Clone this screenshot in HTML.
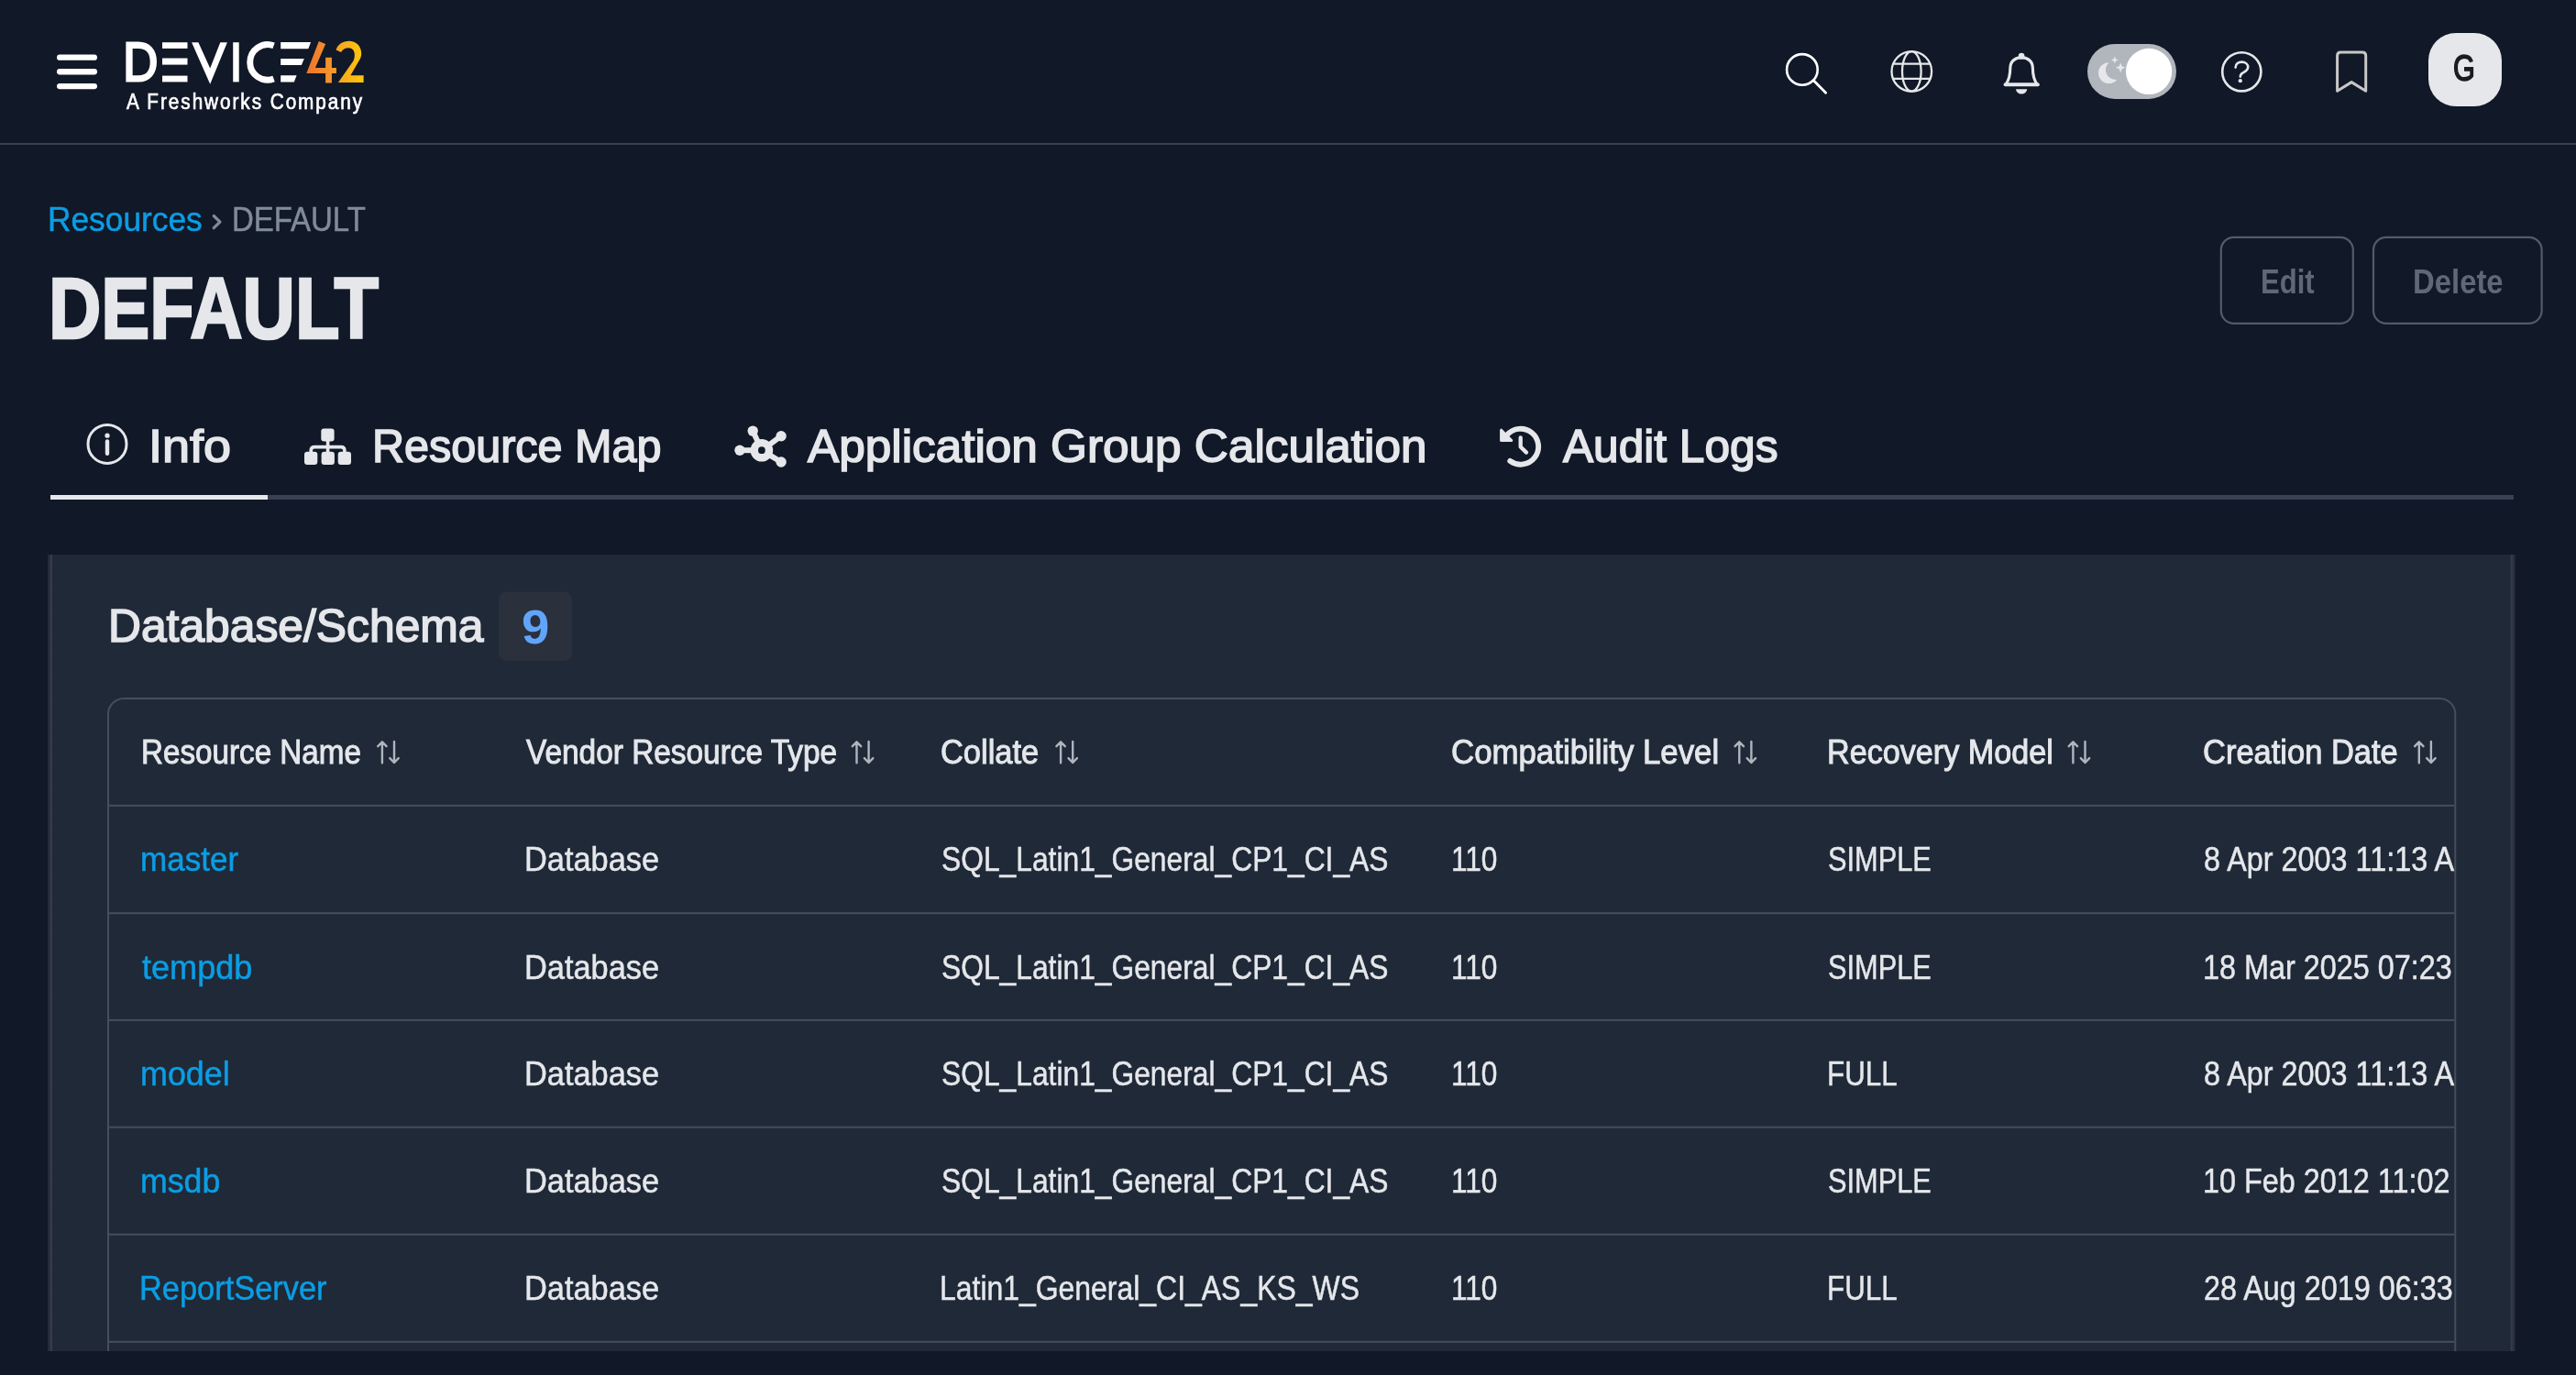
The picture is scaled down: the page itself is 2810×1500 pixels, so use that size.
<!DOCTYPE html>
<html><head><meta charset="utf-8"><title>DEFAULT - Device42</title><style>
html,body{margin:0;padding:0;}
body{width:2810px;height:1500px;background:#111827;position:relative;overflow:hidden;font-family:"Liberation Sans",sans-serif;}
.t{position:absolute;white-space:pre;line-height:1;transform-origin:0 0;}
svg{position:absolute;left:0;top:0;}
</style></head>
<body>
<svg width="2810" height="1500"><rect x="0" y="156" width="2810" height="2" fill="#374151"/>
<rect x="62" y="59.5" width="44" height="6.3" rx="3.15" fill="#ffffff"/>
<rect x="62" y="75.1" width="44" height="6.3" rx="3.15" fill="#ffffff"/>
<rect x="62" y="90.9" width="44" height="6.3" rx="3.15" fill="#ffffff"/>
<path d="M141,49.25 H151 C161.5,49.25 167.35,56.5 167.35,67.6 C167.35,78.7 161.5,85.95 151,85.95 H141 Z" fill="none" stroke="#fff" stroke-width="7.3"/>
<rect x="177" y="46.2" width="27.5" height="6.7" fill="#fff"/>
<rect x="177" y="63.5" width="27.5" height="7.1" fill="#fff"/>
<rect x="177" y="82.6" width="27.5" height="6.8" fill="#fff"/>
<polygon points="209.1,46.2 216.4,46.2 229.2,74.4 240.3,46.2 247.9,46.2 229.2,91.8" fill="#fff"/>
<rect x="254.2" y="46.2" width="6.5" height="43.2" fill="#fff"/>
<path d="M298.60,49.76 A19.3,19.3 0 1 0 298.60,86.04" fill="none" stroke="#fff" stroke-width="6.9"/>
<polygon points="306.2,45.9 339.1,45.9 336.3,53.3 306.2,53.3" fill="#fff"/>
<polygon points="306.2,63.9 331.8,63.9 328.9,70.9 306.2,70.9" fill="#fff"/>
<polygon points="306.2,82.2 323.6,82.2 320.8,89.5 306.2,89.5" fill="#fff"/>
<defs><linearGradient id="g42" x1="334" y1="0" x2="397" y2="0" gradientUnits="userSpaceOnUse"><stop offset="0" stop-color="#ee742c"/><stop offset="0.45" stop-color="#f5962a"/><stop offset="0.6" stop-color="#f9a81e"/><stop offset="1" stop-color="#ffc80c"/></linearGradient></defs>
<polygon points="347.8,45.0 355.1,47.9 343.9,74.0 355.1,74.0 355.1,62.8 361.9,62.8 361.9,74.0 366.9,74.0 366.9,79.9 361.9,79.9 361.9,90.6 355.1,90.6 355.1,79.9 334.3,79.9" fill="url(#g42)"/>
<path d="M366.5,54.4 C368.5,48.5 374,44.8 380.6,44.8 C388.5,44.8 394.2,50.5 394.2,58.5 C394.2,61 393.5,63.2 392.2,65.2 L382.4,82.3 H396.6 V90.1 H368.9 L385.4,66.4 C386.5,64.5 386.8,62 386.8,59.5 C386.8,55 384,52.2 380.3,52.2 C376.5,52.2 373.5,54.2 372.1,57 Z" fill="url(#g42)"/>
<circle cx="1965.9" cy="75.9" r="16.8" fill="none" stroke="#ffffff" stroke-width="2.6"/>
<line x1="1978.3" y1="87.7" x2="1991.6" y2="101.2" stroke="#ffffff" stroke-width="2.8" stroke-linecap="round"/>
<circle cx="2085.3" cy="77.9" r="21.8" fill="none" stroke="#e5e7eb" stroke-width="2.3"/>
<ellipse cx="2085.3" cy="77.9" rx="10.3" ry="21.8" fill="none" stroke="#e5e7eb" stroke-width="2.3"/>
<line x1="2065.14" y1="69.6" x2="2105.46" y2="69.6" stroke="#e5e7eb" stroke-width="2.3"/>
<line x1="2065.02" y1="85.9" x2="2105.58" y2="85.9" stroke="#e5e7eb" stroke-width="2.3"/>
<rect x="2201.8" y="57.8" width="6.6" height="7" rx="3.3" fill="#e5e7eb"/>
<path d="M2188.2,91.8 C2191.8,86.5 2192.8,80 2192.8,74.5 C2192.8,67 2198.2,62.6 2205.1,62.6 C2212,62.6 2217.4,67 2217.4,74.5 C2217.4,80 2218.4,86.5 2222,91.8" fill="none" stroke="#e5e7eb" stroke-width="3.1"/>
<rect x="2185.6" y="90.3" width="39.2" height="3.9" rx="1.95" fill="#e5e7eb"/>
<path d="M2199,97.2 H2211.2 A6.1,5.4 0 0 1 2199,97.2 Z" fill="#e5e7eb"/>
<rect x="2277" y="47.9" width="97" height="60" rx="30" fill="#b1b5bc"/>
<circle cx="2344.1" cy="77.9" r="25.15" fill="#ffffff"/>
<defs><mask id="mm"><rect x="2280" y="55" width="40" height="45" fill="#fff"/><circle cx="2307.6" cy="76.3" r="10.6" fill="#000"/></mask></defs>
<circle cx="2300.4" cy="79.6" r="11.4" fill="#e5e7eb" mask="url(#mm)"/>
<polygon points="2306.80,61.50 2307.93,64.27 2310.70,65.40 2307.93,66.53 2306.80,69.30 2305.67,66.53 2302.90,65.40 2305.67,64.27" fill="#e5e7eb"/>
<polygon points="2313.20,68.40 2314.76,72.24 2318.60,73.80 2314.76,75.36 2313.20,79.20 2311.64,75.36 2307.80,73.80 2311.64,72.24" fill="#e5e7eb"/>
<circle cx="2445.3" cy="78.3" r="21.1" fill="none" stroke="#e5e7eb" stroke-width="2.6"/>
<path d="M2438.6,73.6 C2438.6,69.6 2441.8,67.6 2445.4,67.6 C2449.2,67.6 2452.2,69.8 2452.2,73.3 C2452.2,76.7 2449,78 2446.7,79.4 C2444.6,80.6 2443.8,81.6 2443.8,83.6" fill="none" stroke="#e5e7eb" stroke-width="2.6" stroke-linecap="round"/>
<circle cx="2443.8" cy="88.2" r="2.1" fill="#e5e7eb"/>
<path d="M2549.6,99.2 V60.8 Q2549.6,56.9 2553.5,56.9 H2576.8 Q2580.7,56.9 2580.7,60.8 V99.2 L2565.15,89.6 Z" fill="none" stroke="#c8c8c8" stroke-width="3" stroke-linejoin="round"/>
<rect x="2649" y="36" width="80" height="80" rx="30" fill="#e5e7eb"/>
<rect x="2422.8" y="258.8" width="144" height="94" rx="14" fill="none" stroke="#535b68" stroke-width="2.2"/>
<rect x="2589" y="258.8" width="183.6" height="94" rx="14" fill="none" stroke="#535b68" stroke-width="2.2"/>
<polyline points="233.2,235.5 240,242.1 233.2,248.7" fill="none" stroke="#7f8b98" stroke-width="3.2" stroke-linecap="round" stroke-linejoin="round"/>
<rect x="55" y="540" width="2687" height="5" fill="#374151"/>
<rect x="55" y="540" width="237" height="5" fill="#e5e7eb"/>
<circle cx="117" cy="484.4" r="21" fill="none" stroke="#e5e7eb" stroke-width="3"/>
<circle cx="117" cy="475.2" r="2.6" fill="#e5e7eb"/>
<line x1="117" y1="481.5" x2="117" y2="494.8" stroke="#e5e7eb" stroke-width="4.4" stroke-linecap="round"/>
<rect x="350.3" y="467.4" width="14.3" height="14.1" rx="3.2" fill="#e5e7eb"/>
<rect x="332" y="492.8" width="14.3" height="14.1" rx="3.2" fill="#e5e7eb"/>
<rect x="350.6" y="492.8" width="14.3" height="14.1" rx="3.2" fill="#e5e7eb"/>
<rect x="368.7" y="492.8" width="14.3" height="14.1" rx="3.2" fill="#e5e7eb"/>
<line x1="357.6" y1="480" x2="357.6" y2="494" stroke="#e5e7eb" stroke-width="3.6"/>
<path d="M339.2,494 V491.5 Q339.2,487.6 343.1,487.6 H372 Q375.9,487.6 375.9,491.5 V494" fill="none" stroke="#e5e7eb" stroke-width="3.6"/>
<line x1="820.90" y1="491.20" x2="807" y2="491.2" stroke="#e5e7eb" stroke-width="6"/>
<circle cx="807" cy="491.2" r="5.7" fill="#e5e7eb"/>
<line x1="826.72" y1="482.11" x2="821.2" y2="470.1" stroke="#e5e7eb" stroke-width="6"/>
<circle cx="821.2" cy="470.1" r="5.7" fill="#e5e7eb"/>
<line x1="838.97" y1="485.30" x2="852.1" y2="475.7" stroke="#e5e7eb" stroke-width="6"/>
<circle cx="852.1" cy="475.7" r="5.7" fill="#e5e7eb"/>
<line x1="839.46" y1="496.37" x2="852.1" y2="504" stroke="#e5e7eb" stroke-width="6"/>
<circle cx="852.1" cy="504" r="5.7" fill="#e5e7eb"/>
<circle cx="830.9" cy="491.2" r="8.1" fill="none" stroke="#e5e7eb" stroke-width="8.4"/>
<path d="M1643.80,474.70 A19.45,19.45 0 1 1 1647.27,502.94" fill="none" stroke="#e5e7eb" stroke-width="5.9" stroke-linecap="round"/>
<path d="M1637.6,469.2 L1637.6,480.6 L1648.8,480.6 Z" fill="#e5e7eb" stroke="#e5e7eb" stroke-width="3" stroke-linejoin="round"/>
<polyline points="1658.7,477.5 1658.7,487.5 1665,493.6" fill="none" stroke="#e5e7eb" stroke-width="4.3" stroke-linecap="round" stroke-linejoin="round"/>
<rect x="52" y="605" width="2691.5" height="869" fill="#1f2937"/>
<defs><linearGradient id="lb" x1="0" x2="1"><stop offset="0" stop-color="#1f2533"/><stop offset="1" stop-color="#3b404d"/></linearGradient><linearGradient id="rb" x1="0" x2="1"><stop offset="0" stop-color="#3b404d"/><stop offset="1" stop-color="#1f2533"/></linearGradient></defs>
<rect x="52" y="605" width="5" height="869" fill="url(#lb)"/>
<rect x="2738.8" y="605" width="5" height="869" fill="url(#rb)"/>
<rect x="544" y="645.6" width="80" height="75.3" rx="8" fill="#2a303c"/>
<defs><clipPath id="cc"><rect x="52" y="605" width="2691.5" height="869"/></clipPath></defs>
<rect x="118" y="762" width="2560.3" height="900" rx="17" fill="none" stroke="#464e5b" stroke-width="2" clip-path="url(#cc)"/>
<rect x="119" y="877.8" width="2558.3" height="2" fill="#464e5b"/>
<rect x="119" y="995.2" width="2558.3" height="2" fill="#464e5b"/>
<rect x="119" y="1111.9" width="2558.3" height="2" fill="#464e5b"/>
<rect x="119" y="1228.7" width="2558.3" height="2" fill="#464e5b"/>
<rect x="119" y="1345.7" width="2558.3" height="2" fill="#464e5b"/>
<rect x="119" y="1462.8" width="2558.3" height="2" fill="#464e5b"/>
<path d="M416.9,832.3 V809.4 M412.2,814.2 L416.9,809.3 L421.6,814.2 M430.0,809 V831.9 M425.3,827.1 L430.0,832 L434.7,827.1" fill="none" stroke="#afb4bd" stroke-width="2.4" stroke-linecap="round" stroke-linejoin="round"/>
<path d="M934.5,832.3 V809.4 M929.8,814.2 L934.5,809.3 L939.2,814.2 M947.6,809 V831.9 M942.9,827.1 L947.6,832 L952.3,827.1" fill="none" stroke="#afb4bd" stroke-width="2.4" stroke-linecap="round" stroke-linejoin="round"/>
<path d="M1157.1,832.3 V809.4 M1152.4,814.2 L1157.1,809.3 L1161.8,814.2 M1170.2,809 V831.9 M1165.5,827.1 L1170.2,832 L1174.9,827.1" fill="none" stroke="#afb4bd" stroke-width="2.4" stroke-linecap="round" stroke-linejoin="round"/>
<path d="M1897.3,832.3 V809.4 M1892.6,814.2 L1897.3,809.3 L1902.0,814.2 M1910.4,809 V831.9 M1905.7,827.1 L1910.4,832 L1915.1,827.1" fill="none" stroke="#afb4bd" stroke-width="2.4" stroke-linecap="round" stroke-linejoin="round"/>
<path d="M2261.4,832.3 V809.4 M2256.7,814.2 L2261.4,809.3 L2266.1,814.2 M2274.5,809 V831.9 M2269.8,827.1 L2274.5,832 L2279.2,827.1" fill="none" stroke="#afb4bd" stroke-width="2.4" stroke-linecap="round" stroke-linejoin="round"/>
<path d="M2638.8,832.3 V809.4 M2634.1,814.2 L2638.8,809.3 L2643.5,814.2 M2651.9,809 V831.9 M2647.2,827.1 L2651.9,832 L2656.6,827.1" fill="none" stroke="#afb4bd" stroke-width="2.4" stroke-linecap="round" stroke-linejoin="round"/></svg>
<div class='t' style='left:138.00px;top:100.40px;font-size:23px;font-weight:400;color:#ffffff;-webkit-text-stroke:0.65px #ffffff;letter-spacing:2.187px;transform:scaleX(0.9000)'>A Freshworks Company</div><div class='t' style='left:2676.26px;top:52.50px;font-size:41.5px;font-weight:400;color:#1c1c1c;-webkit-text-stroke:1.6px #1c1c1c;transform:scaleX(0.7379)'>G</div><div class='t' style='left:52.04px;top:222.00px;font-size:36px;font-weight:400;color:#0b9de4;-webkit-text-stroke:0.5px #0b9de4;transform:scaleX(0.9805)'>Resources</div><div class='t' style='left:252.97px;top:222.00px;font-size:36px;font-weight:400;color:#7f8b98;-webkit-text-stroke:0.5px #7f8b98;transform:scaleX(0.9146)'>DEFAULT</div><div class='t' style='left:53.30px;top:289.00px;font-size:94.5px;font-weight:700;color:#e5e7eb;-webkit-text-stroke:2.6px #e5e7eb;transform:scaleX(0.8396)'>DEFAULT</div><div class='t' style='left:2465.53px;top:288.80px;font-size:37.2px;font-weight:700;color:#5f6875;-webkit-text-stroke:0px #5f6875;transform:scaleX(0.8353)'>Edit</div><div class='t' style='left:2631.73px;top:288.80px;font-size:37.2px;font-weight:700;color:#5f6875;-webkit-text-stroke:0px #5f6875;transform:scaleX(0.8835)'>Delete</div><div class='t' style='left:162.03px;top:461.80px;font-size:50.5px;font-weight:400;color:#e5e7eb;-webkit-text-stroke:1.6px #e5e7eb;transform:scaleX(1.0684)'>Info</div><div class='t' style='left:405.92px;top:461.80px;font-size:50.5px;font-weight:400;color:#e5e7eb;-webkit-text-stroke:1.6px #e5e7eb;transform:scaleX(0.9605)'>Resource Map</div><div class='t' style='left:881.02px;top:461.80px;font-size:50.5px;font-weight:400;color:#e5e7eb;-webkit-text-stroke:1.6px #e5e7eb;transform:scaleX(1.0154)'>Application Group Calculation</div><div class='t' style='left:1704.68px;top:461.80px;font-size:50.5px;font-weight:400;color:#e5e7eb;-webkit-text-stroke:1.6px #e5e7eb;transform:scaleX(0.9824)'>Audit Logs</div><div class='t' style='left:117.84px;top:658.00px;font-size:50.5px;font-weight:400;color:#e5e7eb;-webkit-text-stroke:1.6px #e5e7eb;transform:scaleX(0.9855)'>Database/Schema</div><div class='t' style='left:568.80px;top:657.60px;font-size:52px;font-weight:700;color:#60a5fa;-webkit-text-stroke:0px #60a5fa;transform:scaleX(1.0480)'>9</div><div class='t' style='left:153.71px;top:801.80px;font-size:37.2px;font-weight:400;color:#e5e7eb;-webkit-text-stroke:1.0px #e5e7eb;transform:scaleX(0.8929)'>Resource Name</div><div class='t' style='left:574.00px;top:801.80px;font-size:37.2px;font-weight:400;color:#e5e7eb;-webkit-text-stroke:1.0px #e5e7eb;transform:scaleX(0.8981)'>Vendor Resource Type</div><div class='t' style='left:1026.37px;top:801.80px;font-size:37.2px;font-weight:400;color:#e5e7eb;-webkit-text-stroke:1.0px #e5e7eb;transform:scaleX(0.9254)'>Collate</div><div class='t' style='left:1583.26px;top:801.80px;font-size:37.2px;font-weight:400;color:#e5e7eb;-webkit-text-stroke:1.0px #e5e7eb;transform:scaleX(0.9362)'>Compatibility Level</div><div class='t' style='left:1992.76px;top:801.80px;font-size:37.2px;font-weight:400;color:#e5e7eb;-webkit-text-stroke:1.0px #e5e7eb;transform:scaleX(0.9189)'>Recovery Model</div><div class='t' style='left:2403.17px;top:801.80px;font-size:37.2px;font-weight:400;color:#e5e7eb;-webkit-text-stroke:1.0px #e5e7eb;transform:scaleX(0.9272)'>Creation Date</div><div class='t' style='left:152.92px;top:919.10px;font-size:37.2px;font-weight:400;color:#0b9de4;-webkit-text-stroke:0.5px #0b9de4;transform:scaleX(0.9420)'>master</div><div class='t' style='left:571.93px;top:919.10px;font-size:37.2px;font-weight:400;color:#e5e7eb;-webkit-text-stroke:0.5px #e5e7eb;transform:scaleX(0.9245)'>Database</div><div class='t' style='left:1026.65px;top:919.10px;font-size:37.2px;font-weight:400;color:#e5e7eb;-webkit-text-stroke:0.5px #e5e7eb;transform:scaleX(0.8544)'>SQL_Latin1_General_CP1_CI_AS</div><div class='t' style='left:1582.50px;top:919.10px;font-size:37.2px;font-weight:400;color:#e5e7eb;-webkit-text-stroke:0.5px #e5e7eb;transform:scaleX(0.8482)'>110</div><div class='t' style='left:1994.37px;top:919.10px;font-size:37.2px;font-weight:400;color:#e5e7eb;-webkit-text-stroke:0.5px #e5e7eb;transform:scaleX(0.8269)'>SIMPLE</div><div style='position:absolute;left:0;top:0;width:2677.5px;height:1500px;overflow:hidden'><div class='t' style='left:2404.03px;top:919.10px;font-size:37.2px;font-weight:400;color:#e5e7eb;-webkit-text-stroke:0.5px #e5e7eb;transform:scaleX(0.8705)'>8 Apr 2003 11:13 AM</div></div><div class='t' style='left:154.80px;top:1036.50px;font-size:37.2px;font-weight:400;color:#0b9de4;-webkit-text-stroke:0.5px #0b9de4;transform:scaleX(0.9707)'>tempdb</div><div class='t' style='left:571.93px;top:1036.50px;font-size:37.2px;font-weight:400;color:#e5e7eb;-webkit-text-stroke:0.5px #e5e7eb;transform:scaleX(0.9245)'>Database</div><div class='t' style='left:1026.65px;top:1036.50px;font-size:37.2px;font-weight:400;color:#e5e7eb;-webkit-text-stroke:0.5px #e5e7eb;transform:scaleX(0.8544)'>SQL_Latin1_General_CP1_CI_AS</div><div class='t' style='left:1582.50px;top:1036.50px;font-size:37.2px;font-weight:400;color:#e5e7eb;-webkit-text-stroke:0.5px #e5e7eb;transform:scaleX(0.8482)'>110</div><div class='t' style='left:1994.37px;top:1036.50px;font-size:37.2px;font-weight:400;color:#e5e7eb;-webkit-text-stroke:0.5px #e5e7eb;transform:scaleX(0.8269)'>SIMPLE</div><div style='position:absolute;left:0;top:0;width:2677.5px;height:1500px;overflow:hidden'><div class='t' style='left:2403.16px;top:1036.50px;font-size:37.2px;font-weight:400;color:#e5e7eb;-webkit-text-stroke:0.5px #e5e7eb;transform:scaleX(0.8705)'>18 Mar 2025 07:23 AM</div></div><div class='t' style='left:152.87px;top:1153.20px;font-size:37.2px;font-weight:400;color:#0b9de4;-webkit-text-stroke:0.5px #0b9de4;transform:scaleX(0.9649)'>model</div><div class='t' style='left:571.93px;top:1153.20px;font-size:37.2px;font-weight:400;color:#e5e7eb;-webkit-text-stroke:0.5px #e5e7eb;transform:scaleX(0.9245)'>Database</div><div class='t' style='left:1026.65px;top:1153.20px;font-size:37.2px;font-weight:400;color:#e5e7eb;-webkit-text-stroke:0.5px #e5e7eb;transform:scaleX(0.8544)'>SQL_Latin1_General_CP1_CI_AS</div><div class='t' style='left:1582.50px;top:1153.20px;font-size:37.2px;font-weight:400;color:#e5e7eb;-webkit-text-stroke:0.5px #e5e7eb;transform:scaleX(0.8482)'>110</div><div class='t' style='left:1992.67px;top:1153.20px;font-size:37.2px;font-weight:400;color:#e5e7eb;-webkit-text-stroke:0.5px #e5e7eb;transform:scaleX(0.8425)'>FULL</div><div style='position:absolute;left:0;top:0;width:2677.5px;height:1500px;overflow:hidden'><div class='t' style='left:2404.03px;top:1153.20px;font-size:37.2px;font-weight:400;color:#e5e7eb;-webkit-text-stroke:0.5px #e5e7eb;transform:scaleX(0.8705)'>8 Apr 2003 11:13 AM</div></div><div class='t' style='left:152.88px;top:1270.00px;font-size:37.2px;font-weight:400;color:#0b9de4;-webkit-text-stroke:0.5px #0b9de4;transform:scaleX(0.9602)'>msdb</div><div class='t' style='left:571.93px;top:1270.00px;font-size:37.2px;font-weight:400;color:#e5e7eb;-webkit-text-stroke:0.5px #e5e7eb;transform:scaleX(0.9245)'>Database</div><div class='t' style='left:1026.65px;top:1270.00px;font-size:37.2px;font-weight:400;color:#e5e7eb;-webkit-text-stroke:0.5px #e5e7eb;transform:scaleX(0.8544)'>SQL_Latin1_General_CP1_CI_AS</div><div class='t' style='left:1582.50px;top:1270.00px;font-size:37.2px;font-weight:400;color:#e5e7eb;-webkit-text-stroke:0.5px #e5e7eb;transform:scaleX(0.8482)'>110</div><div class='t' style='left:1994.37px;top:1270.00px;font-size:37.2px;font-weight:400;color:#e5e7eb;-webkit-text-stroke:0.5px #e5e7eb;transform:scaleX(0.8269)'>SIMPLE</div><div style='position:absolute;left:0;top:0;width:2677.5px;height:1500px;overflow:hidden'><div class='t' style='left:2403.16px;top:1270.00px;font-size:37.2px;font-weight:400;color:#e5e7eb;-webkit-text-stroke:0.5px #e5e7eb;transform:scaleX(0.8705)'>10 Feb 2012 11:02 PM</div></div><div class='t' style='left:152.03px;top:1387.00px;font-size:37.2px;font-weight:400;color:#0b9de4;-webkit-text-stroke:0.5px #0b9de4;transform:scaleX(0.9248)'>ReportServer</div><div class='t' style='left:571.93px;top:1387.00px;font-size:37.2px;font-weight:400;color:#e5e7eb;-webkit-text-stroke:0.5px #e5e7eb;transform:scaleX(0.9245)'>Database</div><div class='t' style='left:1024.92px;top:1387.00px;font-size:37.2px;font-weight:400;color:#e5e7eb;-webkit-text-stroke:0.5px #e5e7eb;transform:scaleX(0.8586)'>Latin1_General_CI_AS_KS_WS</div><div class='t' style='left:1582.50px;top:1387.00px;font-size:37.2px;font-weight:400;color:#e5e7eb;-webkit-text-stroke:0.5px #e5e7eb;transform:scaleX(0.8482)'>110</div><div class='t' style='left:1992.67px;top:1387.00px;font-size:37.2px;font-weight:400;color:#e5e7eb;-webkit-text-stroke:0.5px #e5e7eb;transform:scaleX(0.8425)'>FULL</div><div style='position:absolute;left:0;top:0;width:2677.5px;height:1500px;overflow:hidden'><div class='t' style='left:2404.03px;top:1387.00px;font-size:37.2px;font-weight:400;color:#e5e7eb;-webkit-text-stroke:0.5px #e5e7eb;transform:scaleX(0.8705)'>28 Aug 2019 06:33 AM</div></div>
</body></html>
